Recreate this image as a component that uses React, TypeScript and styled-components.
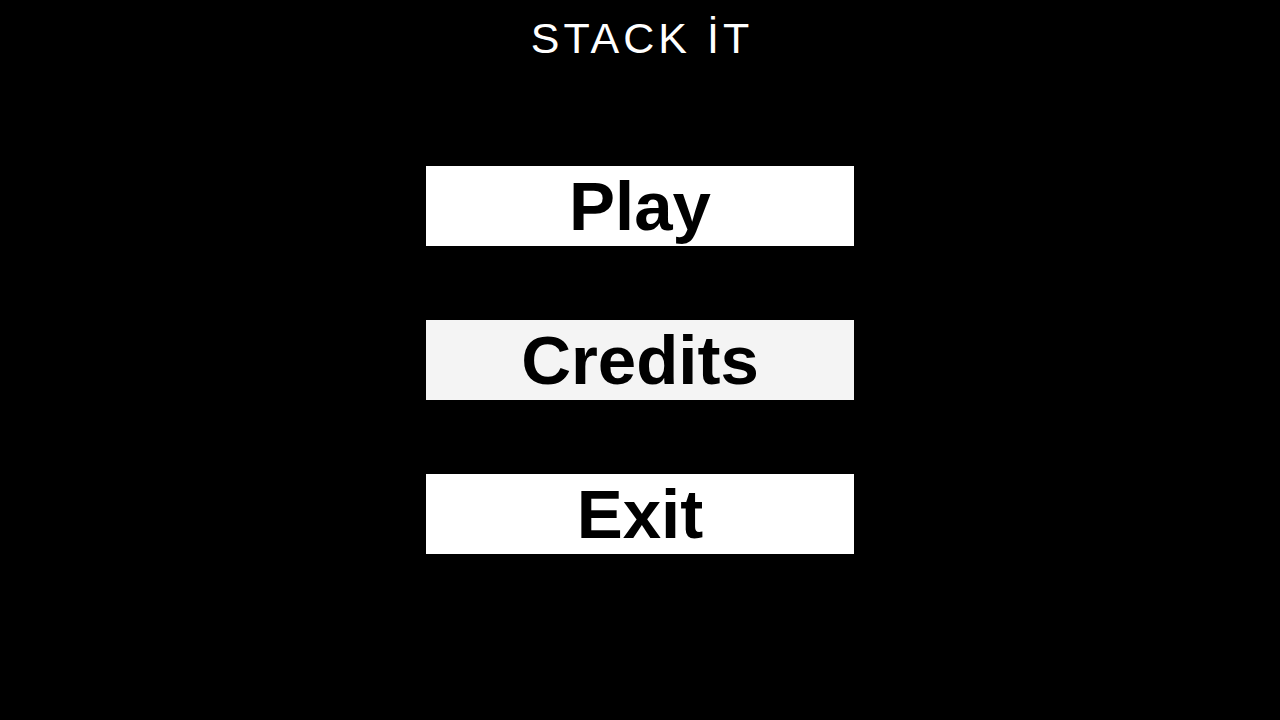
import styled, { createGlobalStyle } from 'styled-components';

const GlobalStyle = createGlobalStyle`
  html, body {
    margin: 0;
    padding: 0;
    background: #000;
  }
  * { box-sizing: border-box; }
`;

const Screen = styled.div`
  min-height: 100vh;
  background: #000;
  display: flex;
  flex-direction: column;
  align-items: center;
  padding-top: 17px;
  font-family: 'Liberation Sans', Arial, sans-serif;
`;

const Title = styled.h1`
  margin: 0;
  font-size: 43px;
  line-height: 1;
  font-weight: 400;
  letter-spacing: 4px;
  padding-left: 4px;
  color: #fff;
`;

const Menu = styled.nav`
  margin-top: 106px;
  display: flex;
  flex-direction: column;
  gap: 74px;
`;

const MenuButton = styled.button<{ $active?: boolean }>`
  width: 428px;
  height: 80px;
  border: none;
  border-radius: 0;
  background: ${p => (p.$active ? '#f4f4f4' : '#fff')};
  color: #000;
  font-family: 'Liberation Sans', Arial, sans-serif;
  font-size: 69px;
  font-weight: 700;
  line-height: 1;
  padding: 0;
  display: flex;
  align-items: center;
  justify-content: center;
  cursor: pointer;
`;

export default function App() {
  return (
    <>
      <GlobalStyle />
      <Screen>
        <Title>STACK İT</Title>
        <Menu>
          <MenuButton>Play</MenuButton>
          <MenuButton $active>Credits</MenuButton>
          <MenuButton>Exit</MenuButton>
        </Menu>
      </Screen>
    </>
  );
}
